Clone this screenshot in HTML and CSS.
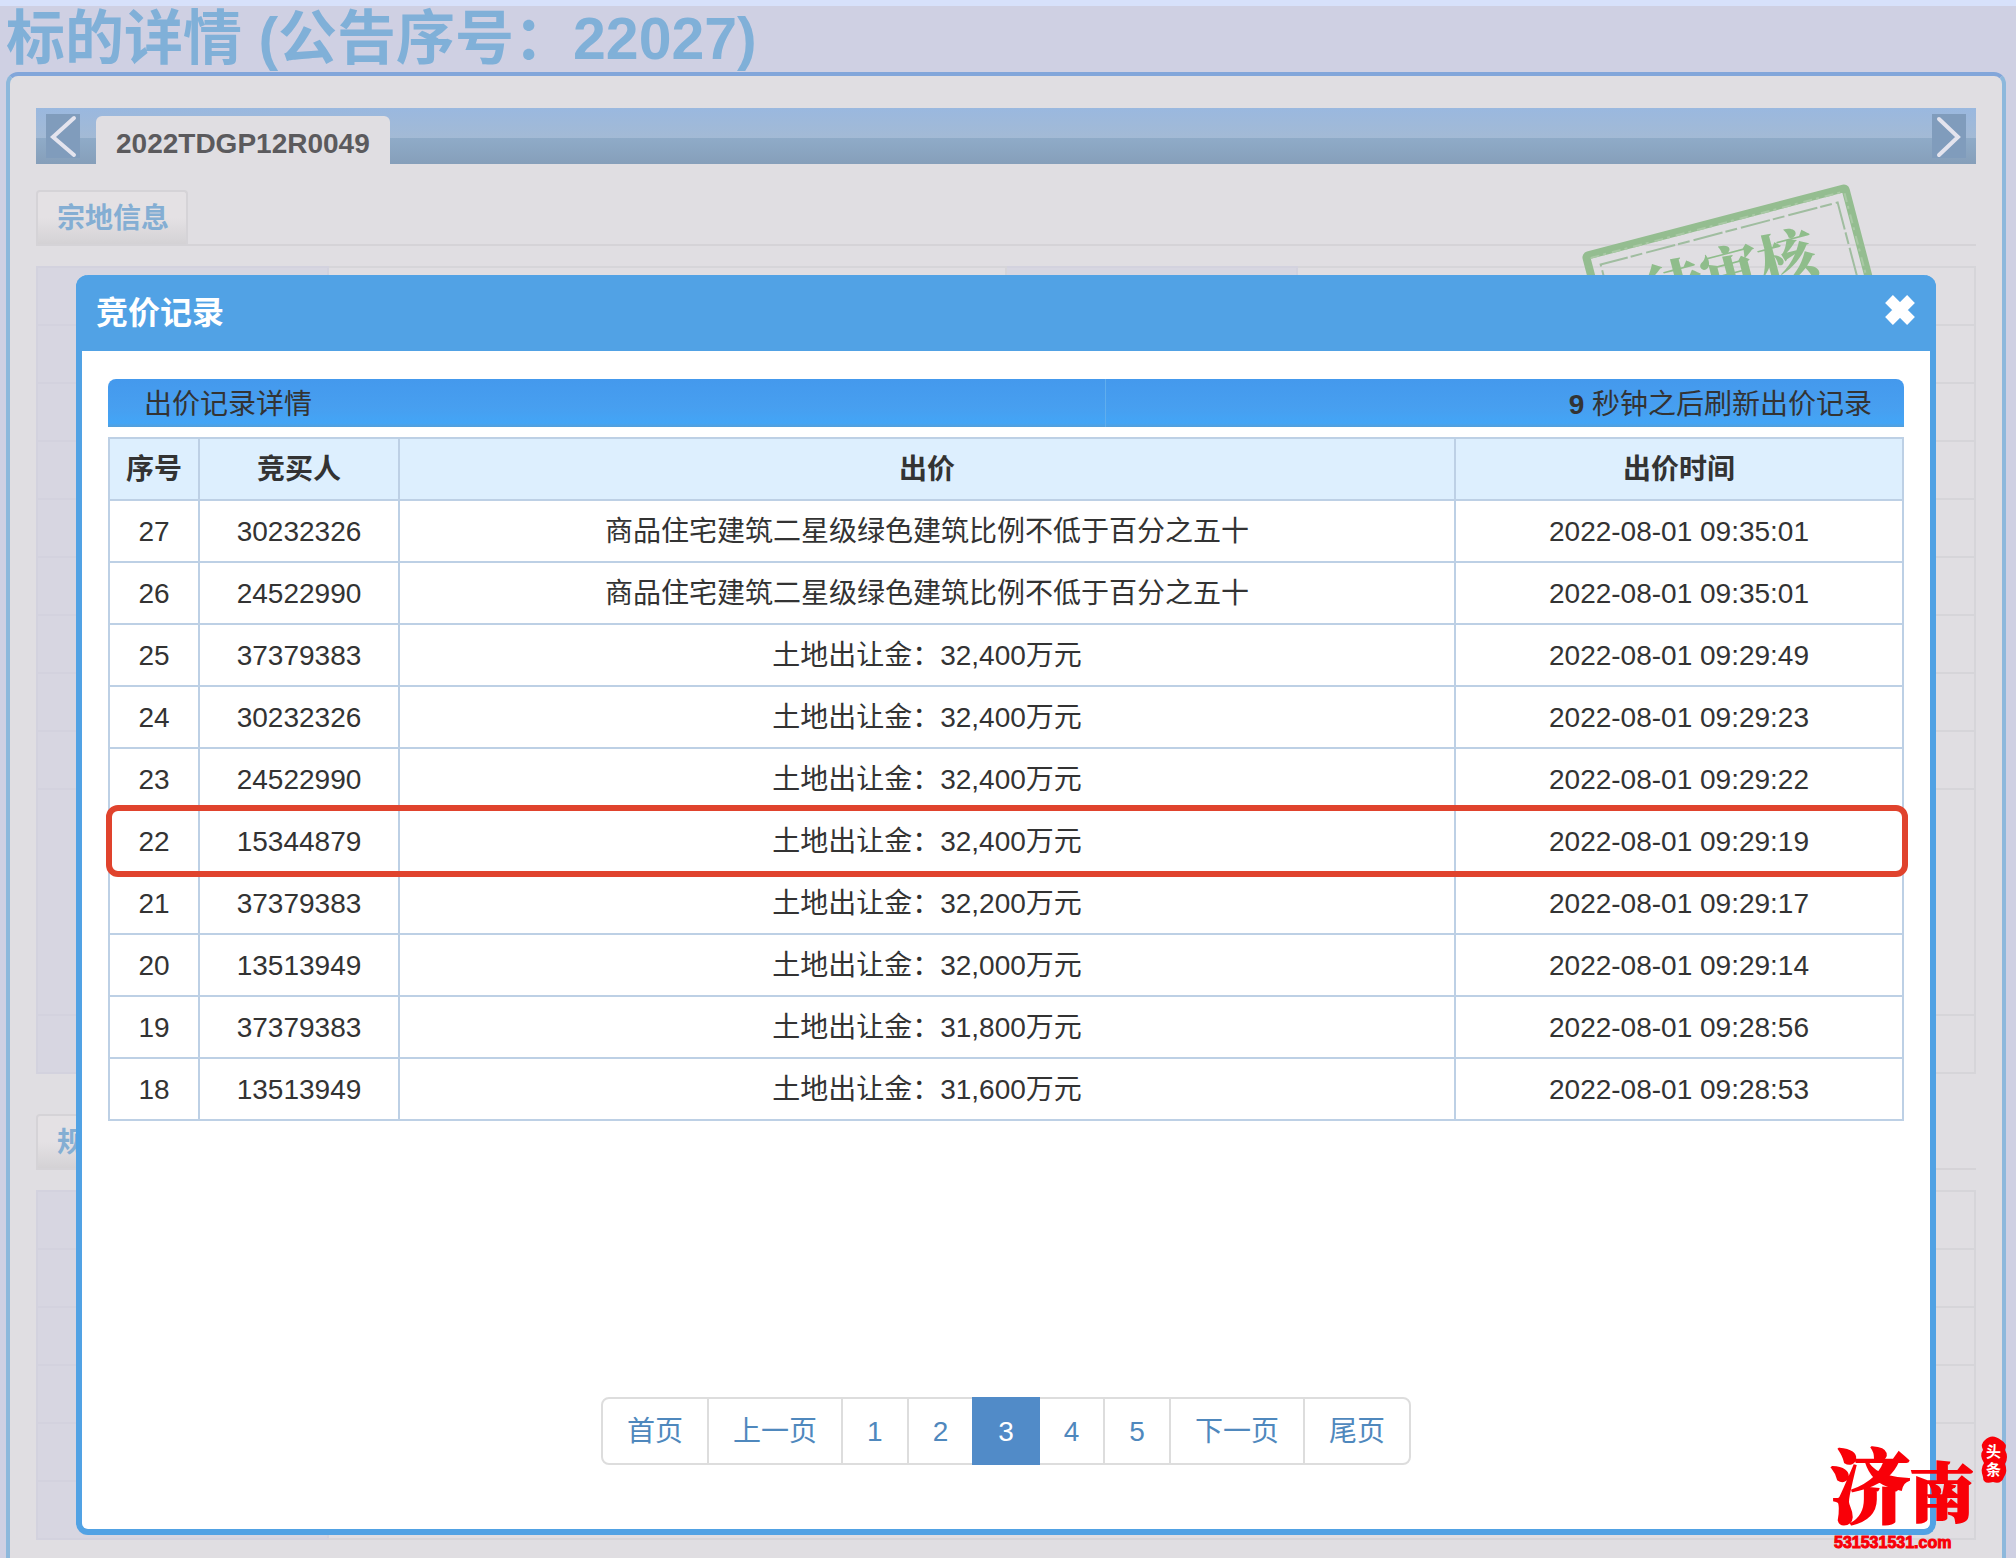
FILE: index.html
```html
<!DOCTYPE html>
<html lang="zh-CN">
<head>
<meta charset="utf-8">
<title>标的详情</title>
<link rel="stylesheet" href="styles.css">
</head>
<body>
<main class="page">
  <h1 class="page-title">标的详情 (公告序号：22027)</h1>
  <section class="panel">
    <nav class="tabs">
      <button class="tabs-arrow" type="button" aria-label="向左"><svg width="34" height="44" viewBox="0 0 34 44"><path d="M28 4 7 23 28 41"/></svg></button>
      <a class="tab" href="#lot">2022TDGP12R0049</a>
      <button class="tabs-arrow tabs-arrow-next" type="button" aria-label="向右"><svg width="34" height="44" viewBox="0 0 34 44"><path d="M7 5 26 23 7 41"/></svg></button>
    </nav>
    <div class="section-head"><h2 class="section-label">宗地信息</h2></div>
    <table class="info">
      <colgroup><col class="info-c1"><col class="info-c2"><col class="info-c3"><col></colgroup>
      <tr><th></th><td></td><th></th><td></td></tr>
      <tr><th></th><td></td><th></th><td></td></tr>
      <tr><th></th><td></td><th></th><td></td></tr>
      <tr><th></th><td></td><th></th><td></td></tr>
      <tr><th></th><td></td><th></th><td></td></tr>
      <tr><th></th><td></td><th></th><td></td></tr>
      <tr><th></th><td></td><th></th><td></td></tr>
      <tr><th></th><td></td><th></th><td></td></tr>
      <tr><th></th><td></td><th></th><td></td></tr>
      <tr class="info-tall"><th></th><td colspan="3"></td></tr>
      <tr><th></th><td colspan="3"></td></tr>
    </table>
    <div class="section-head section-head-next"><h2 class="section-label">规</h2></div>
    <table class="info">
      <colgroup><col class="info-c1"><col class="info-c2"><col class="info-c3"><col></colgroup>
      <tr><th></th><td colspan="3"></td></tr>
      <tr><th></th><td colspan="3"></td></tr>
      <tr><th></th><td colspan="3"></td></tr>
      <tr><th></th><td colspan="3"></td></tr>
      <tr><th></th><td colspan="3"></td></tr>
      <tr><th></th><td colspan="3"></td></tr>
    </table>
  </section>

  <svg class="stamp" width="310" height="200" viewBox="0 0 310 200">
    <g transform="translate(13 76) rotate(-14.7)">
      <rect class="stamp-outer" x="0" y="0" width="268" height="120" rx="2"/>
      <path class="stamp-rough" d="M4 3H266V110"/>
      <path class="stamp-inner" d="M12 112V12H257V112"/>
      <text class="stamp-text" x="49" y="74">待审核</text>
    </g>
  </svg>

  <section class="modal" role="dialog" aria-labelledby="modal-title">
    <header class="modal-head">
      <h2 class="modal-title" id="modal-title">竞价记录</h2>
      <button class="modal-close" type="button" aria-label="关闭"><svg width="32" height="32" viewBox="0 0 32 32"><path d="M5 5 27 27M27 5 5 27"/></svg></button>
    </header>
    <div class="modal-body">
      <div class="bar">
        <div class="bar-left">出价记录详情</div>
        <div class="bar-right"><b>9</b> 秒钟之后刷新出价记录</div>
      </div>
      <table class="bids">
        <colgroup><col class="bids-no"><col class="bids-who"><col><col class="bids-time"></colgroup>
        <thead><tr><th>序号</th><th>竞买人</th><th>出价</th><th>出价时间</th></tr></thead>
        <tbody>
          <tr><td>27</td><td>30232326</td><td>商品住宅建筑二星级绿色建筑比例不低于百分之五十</td><td>2022-08-01 09:35:01</td></tr>
          <tr><td>26</td><td>24522990</td><td>商品住宅建筑二星级绿色建筑比例不低于百分之五十</td><td>2022-08-01 09:35:01</td></tr>
          <tr><td>25</td><td>37379383</td><td>土地出让金：32,400万元</td><td>2022-08-01 09:29:49</td></tr>
          <tr><td>24</td><td>30232326</td><td>土地出让金：32,400万元</td><td>2022-08-01 09:29:23</td></tr>
          <tr><td>23</td><td>24522990</td><td>土地出让金：32,400万元</td><td>2022-08-01 09:29:22</td></tr>
          <tr class="marked"><td>22</td><td>15344879</td><td>土地出让金：32,400万元</td><td>2022-08-01 09:29:19</td></tr>
          <tr><td>21</td><td>37379383</td><td>土地出让金：32,200万元</td><td>2022-08-01 09:29:17</td></tr>
          <tr><td>20</td><td>13513949</td><td>土地出让金：32,000万元</td><td>2022-08-01 09:29:14</td></tr>
          <tr><td>19</td><td>37379383</td><td>土地出让金：31,800万元</td><td>2022-08-01 09:28:56</td></tr>
          <tr><td>18</td><td>13513949</td><td>土地出让金：31,600万元</td><td>2022-08-01 09:28:53</td></tr>
        </tbody>
      </table>
      <nav class="pager">
        <a href="#first">首页</a><a href="#prev">上一页</a><a href="#p1">1</a><a href="#p2">2</a><a class="current" href="#p3" aria-current="page">3</a><a href="#p4">4</a><a href="#p5">5</a><a href="#next">下一页</a><a href="#last">尾页</a>
      </nav>
    </div>
  </section>

  <svg class="brand" width="190" height="124" viewBox="0 0 190 124">
    <g class="brand-name">
      <text class="brand-big" x="4" y="82">济</text>
      <text class="brand-small" x="84" y="82">南</text>
    </g>
    <path class="brand-seal" d="M159 6Q166-1 175 6Q182 10 179 16Q183 23 179 30Q182 37 178 43Q175 51 167 48Q157 51 157 43Q154 35 158 29Q153 21 157 16Q154 10 159 6Z"/>
    <text class="brand-mini" x="160" y="23">头</text>
    <text class="brand-mini" x="160" y="41">条</text>
    <text class="brand-url" x="8" y="114">531531531.com</text>
  </svg>
</main>
</body>
</html>
```
FILE: styles.css
```css
* { box-sizing: border-box; }

body {
  margin: 0;
  background: #cfd0e3;
  color: #333;
  font: 28px/40px "Liberation Sans", "Noto Sans CJK SC", sans-serif;
}

h1, h2 { margin: 0; }
a { text-decoration: none; }
button { border: 0; padding: 0; background: none; cursor: pointer; }
svg { display: block; }

.page {
  position: relative;
  border-top: 6px solid #d7e1fb;
  overflow: hidden;
}

.page-title {
  padding-left: 6px;
  color: #80b0d8;
  font-size: 59px;
  line-height: 66px;
}

.panel {
  margin: 0 10px 0 6px;
  padding: 32px 26px 18px;
  border: 4px solid #8db8dc;
  border-top-color: #82a6da;
  border-bottom: 0;
  border-radius: 12px 12px 0 0;
  background: #e0dee2;
}

/* Lot tabs */
.tabs {
  display: flex;
  align-items: flex-start;
  height: 56px;
  padding: 0 10px;
  background: linear-gradient(#9ab8df, #a3bad5 30px, #8fabc8 30px, #869fba);
}
.tabs-arrow { margin-top: 6px; background: #809cbc; }
.tabs-arrow-next { margin-left: auto; }
.tabs-arrow path { fill: none; stroke: #e4e4ee; stroke-width: 4; stroke-linecap: round; }
.tab {
  height: 48px;
  margin: 8px 0 0 16px;
  padding: 8px 20px 0;
  border-radius: 6px 6px 0 0;
  background: #e0dee2;
  color: #5b5a5d;
  font-weight: 700;
}

.section-head {
  display: flex;
  margin: 26px 0 20px;
  border-bottom: 2px solid #d5d3d7;
}
.section-head-next { margin-top: 40px; }
.section-label {
  width: 152px;
  height: 54px;
  padding: 7px 0 0 19px;
  border: 2px solid #d5d3d7;
  border-bottom: 0;
  border-radius: 4px 4px 0 0;
  background: linear-gradient(#e4e1e4 50%, #d4d2d5);
  color: #84aed3;
  font-size: 28px;
  line-height: 40px;
  white-space: nowrap;
}

.info {
  width: 100%;
  border-collapse: collapse;
  table-layout: fixed;
}
.info tr { height: 58px; }
.info .info-tall { height: 226px; }
.info th, .info td { padding: 0; border: 2px solid #d6d5d9; }
.info th { border-color: #d3d2de; background: #d7d6e1; }
.info-c1, .info-c3 { width: 15%; }
.info-c2 { width: 35%; }

/* Review stamp */
.stamp { position: absolute; top: 174px; right: 133px; }
.stamp-outer { fill: none; stroke: #94bd90; stroke-width: 8; }
.stamp-rough { fill: none; stroke: #a9c9a5; stroke-width: 2; stroke-dasharray: 9 4 3 6; }
.stamp-inner { fill: none; stroke: #a0bda0; stroke-width: 2; stroke-dasharray: 30 3 12 4; }
.stamp-text {
  fill: #8fbd8b;
  font: 900 58px "Noto Serif CJK SC", "Noto Sans CJK SC", serif;
}

/* Bid dialog */
.modal {
  position: absolute;
  top: 269px;
  left: 76px;
  right: 80px;
  border: 6px solid #51a2e4;
  border-top: 0;
  border-radius: 12px;
  background: #fff;
}
.modal-head {
  display: flex;
  align-items: center;
  justify-content: space-between;
  height: 76px;
  margin: 0 -6px;
  padding: 0 20px;
  border-radius: 12px 12px 0 0;
  background: #51a2e5;
  color: #fff;
}
.modal-title { font-size: 32px; line-height: 40px; }
.modal-close { margin-bottom: 6px; }
.modal-close path { stroke: #fff; stroke-width: 11; }
.modal-body { padding: 28px 26px 64px; }

.bar { display: grid; grid-template-columns: 5fr 4fr; height: 48px; }
.bar-left, .bar-right {
  padding: 6px 32px 2px 36px;
  background: linear-gradient(#4499ed, #479ff0 60%, #43a5f6 92%, #559ed8);
}
.bar-left {
  border-right: 1px solid #60aeee;
  border-radius: 8px 0 0 0;
}
.bar-right { border-radius: 0 8px 0 0; text-align: right; }

.bids {
  width: 100%;
  margin-top: 10px;
  border-collapse: collapse;
  table-layout: fixed;
  text-align: center;
}
.bids tr { position: relative; height: 62px; }
.bids th, .bids td { padding: 2px 0 0; border: 2px solid #bdd0e5; }
.bids th { background: #ddeffe; }
.bids-no { width: 90px; }
.bids-who { width: 200px; }
.bids-time { width: 448px; }
.marked td:first-child::after {
  content: "";
  position: absolute;
  inset: -5px -5px -5px -3px;
  border: 6px solid #e0432d;
  border-radius: 12px;
}

.pager {
  display: flex;
  width: max-content;
  margin: 276px auto 0;
  border: 2px solid #ddd;
  border-radius: 8px;
}
.pager a {
  padding: 13px 24px 11px;
  border-left: 2px solid #ddd;
  color: #4f88bd;
}
.pager a:first-child { border-left: 0; }
.pager .current {
  margin: -2px 0;
  padding: 15px 26px 13px;
  border: 0;
  background: #518bc8;
  color: #fff;
}
.pager .current + a { padding-left: 22px; border-left-color: transparent; }

/* Site mark */
.brand { position: absolute; right: 0; bottom: 0; overflow: visible; }
.brand text { fill: #f90008; font-family: "Noto Sans CJK SC", sans-serif; font-weight: 900; }
.brand .brand-name text {
  font-family: "Noto Serif CJK SC", "Noto Sans CJK SC", serif;
  stroke: #f90008;
  stroke-width: 2;
}
.brand .brand-big { font-size: 80px; }
.brand .brand-small { font-size: 64px; }
.brand-seal { fill: #f90008; }
.brand .brand-mini { fill: #fff; font-size: 15px; font-weight: 700; }
.brand .brand-url {
  font-family: "Liberation Sans", sans-serif;
  font-size: 16px;
  stroke: #f90008;
  stroke-width: 1;
}
```
